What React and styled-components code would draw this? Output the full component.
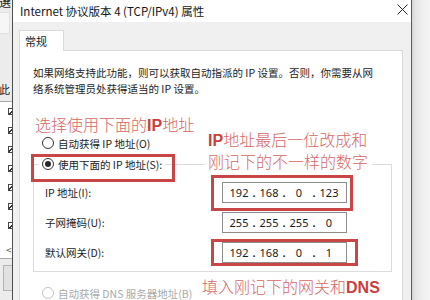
import React from 'react';
import styled, { createGlobalStyle, css } from 'styled-components';

const Global = createGlobalStyle`
  html, body { margin: 0; padding: 0; }
  body {
    width: 430px; height: 300px; overflow: hidden; background: #f0f0f0;
    font-family: "Noto Sans CJK SC", "Noto Sans", sans-serif;
  }
`;

const redFrame = css`
  position: relative;
  &::after {
    content: '';
    position: absolute;
    left: ${p => p.$fx}px;
    top: ${p => p.$fy}px;
    width: ${p => p.$fw}px;
    height: ${p => p.$fh}px;
    border: 3px solid #c94646;
    box-sizing: border-box;
    pointer-events: none;
    z-index: 3;
  }
`;

const Screen = styled.div`
  display: flex;
  width: 430px;
  height: 300px;
  overflow: hidden;
`;

/* ---------- background window strip on the left ---------- */
const LeftStrip = styled.div`
  width: 12px;
  flex: none;
  display: flex;
  flex-direction: column;
  overflow: hidden;
  background: #ececec;
  color: #222;
  font-size: 11px;
`;
const TopChar = styled.div`
  height: 9px;
  overflow: hidden;
  line-height: 12px;
  font-size: 12px;
  & > span { display: block; margin-top: -4px; margin-left: -1px; }
`;
const StripBox = styled.div`
  margin-top: 3px;
  height: 22px;
  width: 10px;
  box-sizing: border-box;
  background: #f6f6f6;
  border: 1px solid #e0e0e0;
  border-left: none;
`;
const StripLabel = styled.div`
  margin-top: 50px;
  height: 11px;
  line-height: 11px;
  font-size: 11px;
  margin-left: -1px;
`;
const StripList = styled.div`
  margin-top: 6px;
  height: 158px;
  box-sizing: border-box;
  background: #fff;
  border-top: 1px solid #a8a8a8;
  border-bottom: 1px solid #a8a8a8;
  display: flex;
  flex-direction: column;
  gap: 12px;
  padding-top: 6px;
`;
const StripCheck = styled.div`
  margin-left: 8px;
  width: 6px;
  height: 7px;
  box-sizing: border-box;
  border: 1px solid #444;
  border-right: none;
  background: linear-gradient(135deg, transparent 40%, #333 40%, #333 60%, transparent 60%);
`;
const StripArrow = styled.div`
  margin-top: auto;
  margin-left: 6px;
  font-size: 10px;
  line-height: 12px;
  color: #555;
  padding-bottom: 2px;
`;
const StripButton = styled.div`
  margin-top: 6px;
  margin-left: 3px;
  height: 26px;
  box-sizing: border-box;
  background: #e1e1e1;
  border: 1px solid #b4b4b4;
  border-right: none;
`;

/* ---------- dialog ---------- */
const Dialog = styled.div`
  width: 400px;
  flex: none;
  box-sizing: border-box;
  border-left: 1px solid #4d4d4d;
  border-right: 1px solid #5a5a5a;
  background: #f0f0f0;
  display: flex;
  flex-direction: column;
`;
const TitleBar = styled.div`
  height: 22px;
  flex: none;
  background: #fff;
  display: flex;
  align-items: center;
  justify-content: space-between;
  padding: 0 3px 0 7px;
  font-size: 11.5px;
  color: #151515;
`;
const CloseIcon = styled.svg`
  width: 11px;
  height: 11px;
  margin-top: -3px;
`;
const Body = styled.div`
  flex: 1;
  display: flex;
  flex-direction: column;
  padding: 8px 8px 0 6px;
`;
const TabRow = styled.div`
  display: flex;
`;
const Tab = styled.div`
  width: 45px;
  height: 21px;
  box-sizing: border-box;
  background: #fff;
  border: 1px solid #d9d9d9;
  border-bottom: none;
  margin-bottom: -1px;
  position: relative;
  z-index: 1;
  padding-left: 5px;
  font-size: 11px;
  line-height: 21px;
  color: #1a1a1a;
`;
const Panel = styled.div`
  flex: 1;
  position: relative;
  background: #fff;
  border: 1px solid #d9d9d9;
  padding: 0 10px 0 13px;
  display: flex;
  flex-direction: column;
  color: #1c1c1c;
`;
const Intro = styled.p`
  margin: 14px 0 0 0;
  font-size: 10.5px;
  line-height: 16px;
`;
const Note = styled.div`
  font-size: 16px;
  font-weight: 300;
  line-height: ${p => p.$lh || 19}px;
  color: #d66663;
  white-space: nowrap;
`;
const NoteLatin = styled.b`
  font-family: "Liberation Sans", Arial, sans-serif;
  font-weight: 700;
  color: #c9403e;
`;
const NoteTop = styled(Note)`
  margin: 18px 0 0 2px;
`;
const NoteOverlay = styled(Note)`
  position: absolute;
  left: 185px;
  top: 78px;
  padding: 0 4px 0 3px;
  background: #fff;
  z-index: 2;
`;
const NoteBottom = styled(Note)`
  margin-top: -8px;
`;
const Option = styled.div`
  display: flex;
  align-items: center;
  gap: 4px;
  height: 16px;
  font-size: 10.5px;
  color: ${p => (p.$disabled ? '#a9a9a9' : '#1c1c1c')};
  padding-left: ${p => p.$indent || 0}px;
  width: ${p => (p.$width ? `${p.$width}px` : 'auto')};
  box-sizing: border-box;
  flex: none;
`;
const Radio = styled.span`
  width: 12px;
  height: 12px;
  box-sizing: border-box;
  border-radius: 50%;
  border: 1px solid ${p => (p.$disabled ? '#c2c2c2' : '#333')};
  background: #fff;
  display: flex;
  align-items: center;
  justify-content: center;
  flex: none;
  &::after {
    content: '';
    display: ${p => (p.$checked ? 'block' : 'none')};
    width: 6px;
    height: 6px;
    border-radius: 50%;
    background: #2a2a2a;
  }
`;
const Group = styled.fieldset`
  margin: 5px 0 0 0;
  border: 1px solid #dcdcdc;
  padding: 10px 0 8px 11px;
  min-width: 0;
`;
const Legend = styled.legend`
  padding: 0 3px;
  margin-left: -6px;
  ${redFrame}
`;
const FieldGrid = styled.div`
  display: grid;
  grid-template-columns: 177px 125px;
  grid-auto-rows: 21px;
  row-gap: 9px;
  align-items: center;
`;
const FieldLabel = styled.div`
  font-size: 10.5px;
  line-height: 16px;
`;
const IPBox = styled.div`
  height: 21px;
  box-sizing: border-box;
  border: 1px solid #8c8c8c;
  background: #fff;
  display: flex;
  align-items: center;
  padding-left: 3px;
  font-family: "Noto Sans", "Liberation Sans", sans-serif;
  font-size: 11px;
  color: #1a1a1a;
  ${p => (p.$framed ? redFrame : '')}
`;
const Octet = styled.span`
  width: 26px;
  text-align: center;
`;
const Dot = styled.span`
  width: 4px;
  text-align: center;
  font-weight: 700;
`;
const DnsRow = styled.div`
  display: flex;
  align-items: flex-start;
  margin-top: 13px;
`;
const RightStrip = styled.div`
  flex: 1;
  background: linear-gradient(to right, #d4d4d4 0, #e4e4e4 3px, #efefef 10px, #f4f4f4 100%);
`;

function IPField({ value, frame }) {
  const parts = value.split('.');
  return (
    <IPBox
      $framed={!!frame}
      $fx={frame?.[0]} $fy={frame?.[1]} $fw={frame?.[2]} $fh={frame?.[3]}
    >
      {parts.map((p, i) => (
        <React.Fragment key={i}>
          <Octet>{p}</Octet>
          {i < parts.length - 1 && <Dot>.</Dot>}
        </React.Fragment>
      ))}
    </IPBox>
  );
}

export default function App() {
  return (
    <>
      <Global />
      <Screen>
        <LeftStrip>
          <TopChar><span>選</span></TopChar>
          <StripBox />
          <StripLabel>此</StripLabel>
          <StripList>
            {Array.from({ length: 7 }).map((_, i) => <StripCheck key={i} />)}
            <StripArrow>&lt;</StripArrow>
          </StripList>
          <StripButton />
        </LeftStrip>

        <Dialog>
          <TitleBar>
            <span>Internet 协议版本 4 (TCP/IPv4) 属性</span>
            <CloseIcon viewBox="0 0 11 11">
              <path d="M0.5 0.5 L10.5 10.5 M10.5 0.5 L0.5 10.5" stroke="#222" strokeWidth="1" fill="none" />
            </CloseIcon>
          </TitleBar>
          <Body>
            <TabRow>
              <Tab>常规</Tab>
            </TabRow>
            <Panel>
              <Intro>
                如果网络支持此功能，则可以获取自动指派的 IP 设置。否则，你需要从网<br />
                络系统管理员处获得适当的 IP 设置。
              </Intro>
              <NoteTop>
                选择使用下面的<NoteLatin>IP</NoteLatin>地址
              </NoteTop>
              <Option $indent={9}>
                <Radio />
                <span>自动获得 IP 地址(O)</span>
              </Option>
              <Group>
                <Legend $fx={-8} $fy={-2} $fw={144} $fh={28}>
                  <Option>
                    <Radio $checked />
                    <span>使用下面的 IP 地址(S):</span>
                  </Option>
                </Legend>
                <FieldGrid>
                  <FieldLabel>IP 地址(I):</FieldLabel>
                  <IPField value="192.168.0.123" frame={[-12, -8, 142, 36]} />
                  <FieldLabel>子网掩码(U):</FieldLabel>
                  <IPField value="255.255.255.0" />
                  <FieldLabel>默认网关(D):</FieldLabel>
                  <IPField value="192.168.0.1" frame={[-12, -4, 147, 27]} />
                </FieldGrid>
              </Group>
              <NoteOverlay $lh={21}>
                <NoteLatin>IP</NoteLatin>地址最后一位改成和<br />
                刚记下的不一样的数字
              </NoteOverlay>
              <DnsRow>
                <Option $indent={9} $width={169} $disabled>
                  <Radio $disabled />
                  <span>自动获得 DNS 服务器地址(B)</span>
                </Option>
                <NoteBottom>
                  填入刚记下的网关和<NoteLatin>DNS</NoteLatin>
                </NoteBottom>
              </DnsRow>
            </Panel>
          </Body>
        </Dialog>
        <RightStrip />
      </Screen>
    </>
  );
}
